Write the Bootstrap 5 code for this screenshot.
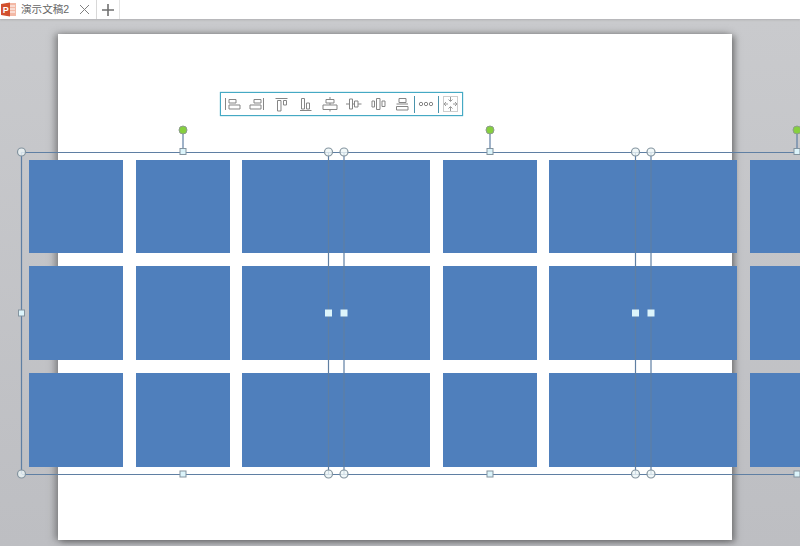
<!DOCTYPE html>
<html lang="zh-CN">
<head>
    <meta charset="UTF-8">
    <meta name="viewport" content="width=device-width, initial-scale=1.0">
    <title>演示文稿2</title>
    <link href="https://cdn.jsdelivr.net/npm/bootstrap@5.3.0/dist/css/bootstrap.min.css" rel="stylesheet">
    <style>
        html, body { height: 100%; overflow: hidden; }
        body { font-family: "Liberation Sans", "Noto Sans CJK SC", sans-serif; background: #c4c5c9; }
        .tab-strip { height: 19px; background: #fff; box-shadow: 0 1px 2px rgba(120,120,120,.3); position: relative; z-index: 3; }
        .doc-tab { width: 97px; height: 19px; border-right: 1px solid #d8d8d8; color: #666; font-size: 10.6px; line-height: 19px; }
        .doc-name { margin-left: 4px; width: 58px; white-space: nowrap; }
        .add-tab { width: 23px; height: 19px; border-right: 1px solid #e4e4e4; }
        .work-area { height: 527px; background: linear-gradient(#c9cacd, #bdbec2); overflow: hidden; }
        .slide-page { left: 58px; top: 15px; width: 674px; height: 506px; background: #fff; box-shadow: -3px 0 7px rgba(70,70,70,.5), 3px 2px 6px rgba(70,70,70,.55); }
        .block-grid { left: 29px; top: 141px; display: grid; grid-template-columns: 94px 94px 188px 94px 188px 94px; grid-template-rows: 93px 94px 94px; column-gap: 12.6px; row-gap: 13px; }
        .block-item { background: #4f7fbc; }
        .select-layer { left: 0; top: 0; }
        .align-bar { left: 220px; top: 73px; width: 243px; height: 24px; background: #fff; border: 1px solid #45a9c4; box-shadow: 0 0 1px #45a9c4; }
        .align-bar svg { display: block; flex-shrink: 0; }
        .bar-sep { width: 1px; height: 17px; background: #4a93ab; flex-shrink: 0; }
        .sep-first { margin-left: 3px; }
        .sep-second { margin-left: 1px; }
    </style>
</head>
<body>
    <div class="tab-strip d-flex align-items-center">
        <div class="doc-tab d-flex align-items-center">
            <svg width="17" height="17" viewBox="0 0 17 17" class="flex-shrink-0">
                <rect x="6" y="2" width="10" height="13" fill="#f3b9a6"/>
                <path d="M9 5h6M9 8h6M9 11h6" stroke="#fff" stroke-width="1"/>
                <path d="M1 3l9-1.500v14L1 14z" fill="#d2502e"/>
                <text x="2.700" y="12" font-size="9" font-weight="700" fill="#fff" font-family="Liberation Sans">P</text>
            </svg>
            <span class="doc-name">演示文稿2</span>
            <svg width="11" height="11" viewBox="0 0 11 11" class="flex-shrink-0"><path d="M1 1l9 9M10 1l-9 9" stroke="#808080" stroke-width="1"/></svg>
        </div>
        <div class="add-tab d-flex align-items-center justify-content-center">
            <svg width="12" height="12" viewBox="0 0 12 12"><path d="M6 0v12M0 6h12" stroke="#707070" stroke-width="1.600"/></svg>
        </div>
    </div>

    <div class="work-area position-relative">
        <div class="slide-page position-absolute"></div>

        <div class="block-grid position-absolute">
            <div class="block-item"></div><div class="block-item"></div><div class="block-item"></div><div class="block-item"></div><div class="block-item"></div><div class="block-item"></div>
            <div class="block-item"></div><div class="block-item"></div><div class="block-item"></div><div class="block-item"></div><div class="block-item"></div><div class="block-item"></div>
            <div class="block-item"></div><div class="block-item"></div><div class="block-item"></div><div class="block-item"></div><div class="block-item"></div><div class="block-item"></div>
        </div>

        <!-- selection frame, coordinates are page y minus 19 -->
        <svg class="select-layer position-absolute" width="800" height="527" viewBox="0 19 800 527" id="selectLayer"></svg>

        <div class="align-bar position-absolute d-flex align-items-center">
            <svg width="24.300" height="18" viewBox="0 0 24.300 18" fill="none" stroke="#858585"><path d="M4.500 3v12M8 4.500h7v3.500H8zM8 10h11v4H8z"/></svg>
            <svg width="24.300" height="18" viewBox="0 0 24.300 18" fill="none" stroke="#858585"><path d="M18.500 3v12M9 4.500h7v3.500H9zM5 10h11v4H5z"/></svg>
            <svg width="24.300" height="18" viewBox="0 0 24.300 18" fill="none" stroke="#858585"><path d="M5.500 3.500h12M7.500 5.500h3.500v10.500H7.500zM13.500 5.500h3v4.500h-3z"/></svg>
            <svg width="24.300" height="18" viewBox="0 0 24.300 18" fill="none" stroke="#858585"><path d="M6 15.500h11.500M7.500 3.500h3v10.500h-3zM12.500 8h3v6h-3z"/></svg>
            <svg width="24.300" height="18" viewBox="0 0 24.300 18" fill="none" stroke="#858585"><path d="M12 2v2.500M12 8v2M12 14.500v2M8 4.500h8v3.500H8zM5 10h14v4.500H5z"/></svg>
            <svg width="24.300" height="18" viewBox="0 0 24.300 18" fill="none" stroke="#858585"><path d="M4 9h3.500M10.500 9h2M16 9h3.500M7.500 4h3v10h-3zM12.500 6H16v6h-3.500z"/></svg>
            <svg width="24.300" height="18" viewBox="0 0 24.300 18" fill="none" stroke="#858585"><path d="M5 6h2.500v6H5zM9.500 3.500H13v11H9.500zM15 6h3v5.500h-3z"/></svg>
            <svg width="20" height="18" viewBox="0 0 20 18" fill="none" stroke="#858585"><path d="M8 3.500h7v4H8zM5.500 9h11.500M5.500 11.500H17v3.500H5.500z"/></svg>
            <div class="bar-sep sep-first"></div>
            <svg width="22" height="18" viewBox="0 0 22 18" fill="none" stroke="#858585"><circle cx="6" cy="9" r="1.700"/><circle cx="11" cy="9" r="1.700"/><circle cx="16" cy="9" r="1.700"/></svg>
            <div class="bar-sep sep-second"></div>
            <svg width="22" height="18" viewBox="0 0 22 18" fill="none" stroke="#9a9a9a">
                <rect x="4.500" y="1.500" width="14" height="15" stroke-dasharray="1 1"/>
                <path d="M11.500 2v4M9.500 4.500l2 2 2-2M11.500 16v-4M9.500 13.500l2-2 2 2M5 9h4M7 7l-2 2 2 2M18 9h-4M16 7l2 2-2 2"/>
            </svg>
        </div>
    </div>

    <script src="https://cdn.jsdelivr.net/npm/bootstrap@5.3.0/dist/js/bootstrap.bundle.min.js"></script>
    <script>
        // selection frames and their handles
        var frameLine = "#5f7fa3";
        var parts = [];
        function line(x1, y1, x2, y2, w) {
            parts.push('<line x1="' + x1 + '" y1="' + y1 + '" x2="' + x2 + '" y2="' + y2 + '" stroke="' + frameLine + '" stroke-width="' + (w || 1) + '"/>');
        }
        function ring(x, y) {
            parts.push('<circle cx="' + x + '" cy="' + y + '" r="4" fill="#eef6f8" fill-opacity=".8" stroke="#84949f" stroke-width="1.200"/>');
        }
        function box(x, y, stroke) {
            parts.push('<rect x="' + (x - 3) + '" y="' + (y - 3) + '" width="6" height="6" fill="#dcf4fb" stroke="' + stroke + '" stroke-width="1"/>');
        }
        function rotate(x) {
            line(x, 130, x, 152, 1.2);
            parts.push('<circle cx="' + x + '" cy="130" r="4" fill="#86cf3f" stroke="#8d9d8d" stroke-width="1"/>');
        }

        line(22, 152.500, 800, 152.500, 1.2);
        line(22, 474.500, 800, 474.500, 1.2);
        line(21.500, 152, 21.500, 474, 1.2);
        [328.500, 344, 635.500, 651].forEach(function (x) { line(x, 152, x, 474, 1.2); });
        [183, 490, 797].forEach(rotate);
        [21.500, 328.500, 344, 635.500, 651].forEach(function (x) { ring(x, 152); ring(x, 474); });
        [183, 490, 797].forEach(function (x) { box(x, 151.500, "#84949f"); box(x, 474, "#84949f"); });
        box(21.500, 313, "#84949f");
        [328.500, 344, 635.500, 651].forEach(function (x) { box(x, 313, "#dcf4fb"); });
        document.getElementById("selectLayer").innerHTML = parts.join("");
    </script>
</body>
</html>
